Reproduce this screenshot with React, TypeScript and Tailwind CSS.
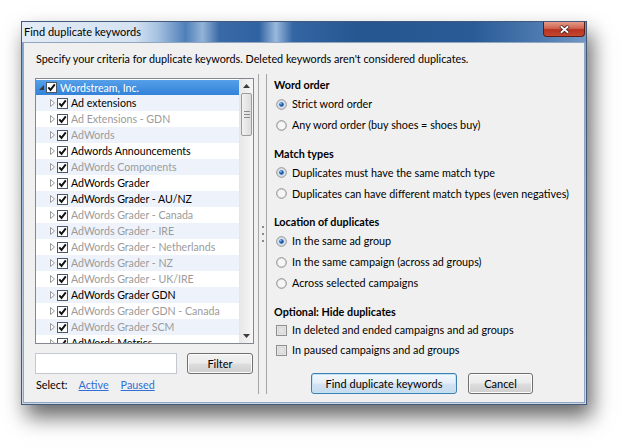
import React from 'react'

type Item = { name: string; dim?: boolean }

const items: Item[] = [
  { name: 'Ad extensions' },
  { name: 'Ad Extensions - GDN', dim: true },
  { name: 'AdWords', dim: true },
  { name: 'Adwords Announcements' },
  { name: 'AdWords Components', dim: true },
  { name: 'AdWords Grader' },
  { name: 'AdWords Grader - AU/NZ' },
  { name: 'AdWords Grader - Canada', dim: true },
  { name: 'AdWords Grader - IRE', dim: true },
  { name: 'AdWords Grader - Netherlands', dim: true },
  { name: 'AdWords Grader - NZ', dim: true },
  { name: 'AdWords Grader - UK/IRE', dim: true },
  { name: 'AdWords Grader GDN' },
  { name: 'AdWords Grader GDN - Canada', dim: true },
  { name: 'AdWords Grader SCM', dim: true },
  { name: 'AdWords Metrics' },
]

const Check = ({ checked }: { checked?: boolean }) => (
  <svg width="11" height="11" viewBox="0 0 11 11" className="shrink-0">
    {checked ? (
      <>
        <rect x="0.5" y="0.5" width="10" height="10" fill="#fff" stroke="#4a5868" />
        <path d="M2.3 5.4 L4.5 7.9 L8.8 2.4" fill="none" stroke="#111" strokeWidth="1.9" />
      </>
    ) : (
      <>
        <rect x="0.5" y="0.5" width="10" height="10" fill="#f4f4f4" stroke="#8e8f8f" />
        <rect x="2" y="2" width="7" height="7" fill="#e2e2e2" stroke="#c4c4c4" strokeWidth="0.6" />
      </>
    )}
  </svg>
)

const Radio = ({ on }: { on?: boolean }) => (
  <svg width="11" height="11" viewBox="0 0 11 11" className="shrink-0">
    <circle cx="5.5" cy="5.5" r="4.8" fill="#e9e9e9" stroke="#8c8c8c" />
    <circle cx="5.5" cy="5.5" r="3.5" fill={on ? '#cfe0f2' : '#f6f6f6'} />
    {on && <circle cx="5.5" cy="5.5" r="2.3" fill="#1f5da6" />}
    {on && <circle cx="4.8" cy="4.7" r="0.9" fill="#8fbbe8" />}
  </svg>
)

const Expander = () => (
  <svg width="5" height="8" viewBox="0 0 5 8" className="shrink-0">
    <path d="M0.5 0.5 L4.5 4 L0.5 7.5 Z" fill="#fff" stroke="#9a9a9a" />
  </svg>
)

const Row = ({ item, odd }: { item: Item; odd: boolean }) => (
  <div className={`flex h-4 shrink-0 items-center pl-[14px] ${odd ? 'bg-[#eef3fb]' : 'bg-white'}`}>
    <Expander />
    <div className="ml-[2px]">
      <Check checked />
    </div>
    <span className={`ml-[3px] whitespace-nowrap text-[10.6px] ${item.dim ? 'text-[#9b9b9b]' : 'text-black'}`}>{item.name}</span>
  </div>
)

const WinButton = ({ label, primary, w }: { label: string; primary?: boolean; w: string }) => (
  <button
    className={`${w} h-[21px] rounded-[3px] border text-[11px] text-black ${
      primary
        ? 'border-[#3c7fb1] bg-[linear-gradient(#f2f7fc_0%,#e5eef8_48%,#d4e3f3_52%,#c6dbef_100%)] shadow-[inset_0_0_0_1px_#c5e3f7]'
        : 'border-[#707070] bg-[linear-gradient(#f2f2f2_0%,#ebebeb_48%,#dddddd_52%,#cfcfcf_100%)] shadow-[inset_0_0_0_1px_#fbfbfb]'
    }`}
  >
    {label}
  </button>
)

const Option = ({ label, on, box }: { label: string; on?: boolean; box?: boolean }) => (
  <div className={`flex ${box ? 'h-5' : 'h-[21px]'} items-center pl-[2px]`}>
    {box ? <Check /> : <Radio on={on} />}
    <span className="ml-[5px] whitespace-nowrap">{label}</span>
  </div>
)

const Section = ({ title, children, first }: { title: string; children: React.ReactNode; first?: boolean }) => (
  <div className={first ? '' : 'mt-[10px]'}>
    <div className="h-4 leading-4 font-bold">{title}</div>
    <div className="mt-[0.5px]">{children}</div>
  </div>
)

const App = () => {
  return (
    <div className="h-[447px] w-[628px] overflow-hidden bg-white pl-[21px] pt-[21px] font-['Lato',sans-serif] text-[10.8px] leading-4 text-black">
      <div className="flex h-[384px] w-[566px] flex-col border border-[#45597a] bg-[linear-gradient(#7fa0c9,#c7d6e7)] shadow-[5px_12px_20px_rgba(0,0,0,0.6)]">
        {/* title bar */}
        <div className="flex h-5 shrink-0 items-start justify-between bg-[linear-gradient(90deg,#e3ecf6_0%,#d4e2f1_20%,#a7c2e2_24%,#4f7fb8_29%,#93b3d8_32%,#3a6aa6_35%,#2f62a2_42%,#9ab9dc_45%,#3566a4_48%,#25568f_60%,#2a5b96_80%,#4d7bb1_92%,#7197c4_100%)]">
          <span className="pl-[2px] pt-[2px] text-[11px] leading-4 text-black">Find duplicate keywords</span>
          <div className="mr-[1px] flex h-[15px] w-[42px] items-center justify-center rounded-b-[4px] border border-t-0 border-[#5c1e14] bg-[linear-gradient(#e49a89_0%,#d06450_45%,#b8321f_55%,#c4482f_100%)]">
            <svg width="11" height="9" viewBox="0 0 11 9">
              <path d="M1.5 1 L9.5 8 M9.5 1 L1.5 8" stroke="#3b1a14" strokeWidth="3.4" />
              <path d="M1.8 1.3 L9.2 7.7 M9.2 1.3 L1.8 7.7" stroke="#fff" strokeWidth="1.8" />
            </svg>
          </div>
        </div>

        {/* content */}
        <div className="mx-px mb-px flex min-w-0 flex-1 flex-col border border-[#93a6bf] bg-[#f0f0f0]">
          <div className="mt-[8px] h-4 pl-[12px] whitespace-nowrap">
            Specify your criteria for duplicate keywords. Deleted keywords aren't considered duplicates.
          </div>

          <div className="mt-[7px] flex min-w-0 flex-1 pb-[8px]">
            {/* left pane */}
            <div className="flex w-[235px] shrink-0 flex-col border-r border-[#a5a5a5] pl-[11px] pt-[4px]">
              <div className="flex h-[266px] w-[219px] border border-[#828790] bg-white">
                <div className="flex w-[203px] flex-col overflow-hidden pt-px">
                  <div className="flex h-[15px] shrink-0 items-center bg-[linear-gradient(#56a0ea,#3382d8)] pl-[3px] text-white">
                    <svg width="5" height="5" viewBox="0 0 5 5" className="shrink-0">
                      <path d="M5 0 L5 5 L0 5 Z" fill="#3a3a3a" />
                    </svg>
                    <div className="ml-[2px]">
                      <Check checked />
                    </div>
                    <span className="ml-[3px] whitespace-nowrap text-[10.6px]">Wordstream, Inc.</span>
                  </div>
                  {items.map((it, i) => (
                    <Row key={it.name} item={it} odd={i % 2 === 0} />
                  ))}
                </div>
                {/* scrollbar */}
                <div className="flex w-[14px] flex-col border-l border-[#e6e6e6] bg-[linear-gradient(90deg,#e8e8e8,#f6f6f6)]">
                  <div className="flex h-[14px] items-center justify-center">
                    <svg width="7" height="4" viewBox="0 0 7 4">
                      <path d="M0 4 L3.5 0 L7 4 Z" fill="#3c3c3c" />
                    </svg>
                  </div>
                  <div className="mx-px flex h-[43px] flex-col items-center justify-center gap-[2px] rounded-[2px] border border-[#9b9b9b] bg-[linear-gradient(90deg,#f1f1f1,#dcdcdc)]">
                    <div className="h-px w-[6px] bg-[#8a8a8a]" />
                    <div className="h-px w-[6px] bg-[#8a8a8a]" />
                    <div className="h-px w-[6px] bg-[#8a8a8a]" />
                  </div>
                  <div className="flex-1" />
                  <div className="flex h-[14px] items-center justify-center">
                    <svg width="7" height="4" viewBox="0 0 7 4">
                      <path d="M0 0 L3.5 4 L7 0 Z" fill="#3c3c3c" />
                    </svg>
                  </div>
                </div>
              </div>

              <div className="mt-[9px] flex items-center">
                <div className="h-[21px] w-[142px] border border-[#c3c7ce] bg-white" />
                <div className="ml-[10px]">
                  <WinButton label="Filter" w="w-[66px]" />
                </div>
              </div>

              <div className="mt-[3px] flex h-4 items-center pl-px">
                <span>Select:</span>
                <span className="ml-[11px] text-[#2f6fd6] underline">Active</span>
                <span className="ml-[12px] text-[#2f6fd6] underline">Paused</span>
              </div>
            </div>

            {/* splitter */}
            <div className="flex w-[7px] shrink-0 flex-col items-center justify-center gap-[5px]">
              <div className="h-[2px] w-[2px] bg-[#8a8a8a]" />
              <div className="h-[2px] w-[2px] bg-[#8a8a8a]" />
              <div className="h-[2px] w-[2px] bg-[#8a8a8a]" />
            </div>

            {/* right pane */}
            <div className="flex min-w-0 flex-1 flex-col border-l border-[#a5a5a5] pl-[7px] pt-[3px]">
              <Section title="Word order" first>
                <Option label="Strict word order" on />
                <Option label="Any word order (buy shoes = shoes buy)" />
              </Section>
              <Section title="Match types">
                <Option label="Duplicates must have the same match type" on />
                <Option label="Duplicates can have different match types (even negatives)" />
              </Section>
              <Section title="Location of duplicates">
                <Option label="In the same ad group" on />
                <Option label="In the same campaign (across ad groups)" />
                <Option label="Across selected campaigns" />
              </Section>
              <Section title="Optional: Hide duplicates">
                <Option label="In deleted and ended campaigns and ad groups" box />
                <Option label="In paused campaigns and ad groups" box />
              </Section>
              <div className="mt-[13px] flex gap-[11px] pl-[37px]">
                <WinButton label="Find duplicate keywords" primary w="w-[146px]" />
                <WinButton label="Cancel" w="w-[65px]" />
              </div>
            </div>
          </div>
        </div>
      </div>
    </div>
  )
}

export default App
